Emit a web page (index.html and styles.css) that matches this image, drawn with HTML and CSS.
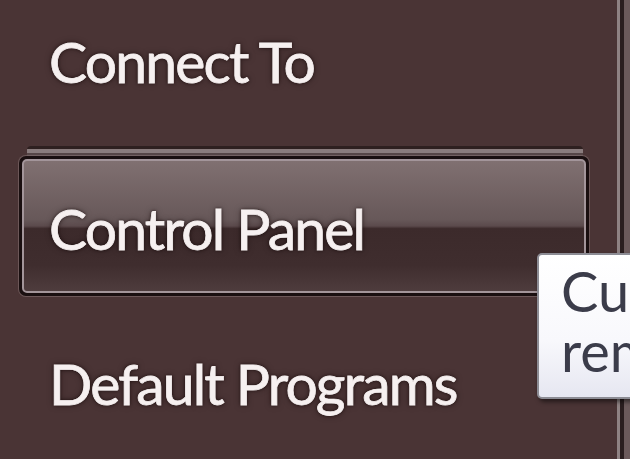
FILE: index.html
```html
<!DOCTYPE html>
<html>

<head>
    <title>Start Menu</title>
    <link rel="stylesheet" href="styles.css">
</head>

<body>
    <div class="menu">
        <div class="pane">
            <div class="item first">Connect To</div>
            <div class="separator"></div>
            <div class="item active">
                <div class="active-inner">Control Panel</div>
            </div>
            <div class="item last">Default Programs</div>
        </div>
        <div class="edge">
            <span class="edge-light"></span>
            <span class="edge-dark"></span>
            <span class="edge-mid"></span>
        </div>
    </div>

    <div class="tooltip">
        <div>Customize the</div>
        <div>remote settings</div>
    </div>
</body>

</html>
```

FILE: styles.css
```css
* {
    padding: 0;
    margin: 0;
    box-sizing: border-box;
}

body {
    background-color: #4a3435;
    width: 630px;
    height: 459px;
    overflow: hidden;
    position: relative;
    font-family: Lato, "Open Sans", sans-serif;
}

.menu {
    display: flex;
    height: 459px;
}

.pane {
    flex: 1;
    padding-left: 19px;
    padding-right: 28px;
}

.item {
    font-size: 57px;
    letter-spacing: -1.8px;
    line-height: 64px;
    color: #f6f0f0;
    -webkit-text-stroke: 0.8px #f6f0f0;
    text-shadow: 0 0 3px rgba(20, 8, 8, 0.9), 0 0 6px rgba(20, 8, 8, 0.5);
    padding-left: 30px;
    white-space: nowrap;
}

.first {
    margin-top: 29px;
}

/* linea que separa los grupos */
.separator {
    margin: 53px 6px 0 8px;
    height: 10px;
    border-radius: 4px 4px 0 0;
    background: linear-gradient(#2e2020 0, #2e2020 3px, #8a7c7d 3px, #8a7c7d 7px, #564647 7px, #564647 100%);
}

.active {
    padding: 0;
    height: 140px;
    border: 3px solid #1a0f10;
    border-radius: 7px;
    background: #1a0f10;
    box-shadow: 0 0 0 1px rgba(150, 130, 130, 0.45);
}

.active-inner {
    height: 100%;
    border: 2px solid #a3959a;
    border-radius: 5px;
    padding-left: 25px;
    padding-top: 35px;
    background: linear-gradient(#807071 0%, #675859 45%, #5b4a4c 50%, #3c2a2b 52%, #3f2d2e 80%, #4e3c3d 100%);
}

.last {
    margin-top: 55px;
}

.edge {
    width: 13px;
    display: flex;
}

.edge-light {
    width: 3px;
    background: #8e8283;
}

.edge-dark {
    width: 4px;
    background: #2a1e1f;
}

.edge-mid {
    flex: 1;
    background: #6b5a5b;
}

.tooltip {
    position: absolute;
    left: 537px;
    top: 253px;
    width: 400px;
    height: 146px;
    padding: 6px 0 0 22px;
    border: 2px solid #8c8c94;
    border-radius: 5px;
    background: linear-gradient(#ffffff 0%, #f8f8fc 60%, #e6e7f1 100%);
    box-shadow: 2px 3px 4px rgba(0, 0, 0, 0.5);
    color: #3b3c4a;
    font-size: 56px;
    line-height: 60px;
    white-space: nowrap;
}
```
